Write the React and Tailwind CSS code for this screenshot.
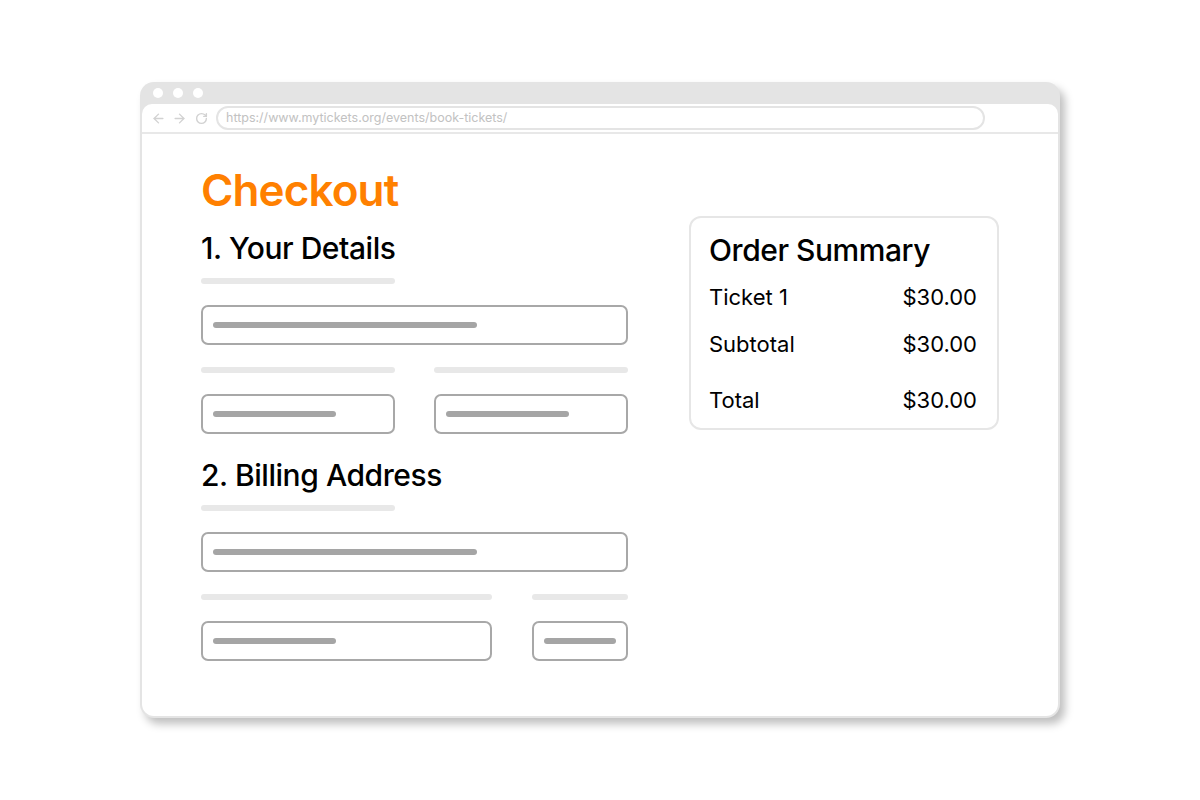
import React from 'react';
import { ArrowLeft, ArrowRight, RotateCw } from 'lucide-react';

const font = { fontFamily: 'Inter, "Noto Sans", sans-serif' };

const Label = ({ w = 'w-full' }) => (
  <div className={`h-[6px] rounded-full bg-[#e8e8e8] ${w}`} />
);

const Field = ({ bar = 'w-[264px]', className = '' }) => (
  <div className={`h-[40px] rounded-[7px] border-2 border-[#a8a8a8] flex items-center pl-[10px] ${className}`}>
    <div className={`h-[6px] rounded-full bg-[#a5a5a5] ${bar}`} />
  </div>
);

const Row = ({ name, value, className = '' }) => (
  <div className={`flex justify-between items-baseline text-[22px] leading-[28px] text-black ${className}`}>
    <span>{name}</span>
    <span>{value}</span>
  </div>
);

export default function App() {
  return (
    <div className="w-full h-screen bg-white flex items-center justify-center" style={font}>
      {/* browser window */}
      <div className="w-[920px] h-[636px] rounded-[14px] bg-[#e4e4e4] px-[2px] pb-[2px] pt-[22px] flex flex-col shadow-[5px_6px_8px_rgba(0,0,0,0.25)]">
        <div className="absolute ml-[11px] -mt-[16px] flex gap-[10px]">
          <span className="w-[10px] h-[10px] rounded-full bg-white" />
          <span className="w-[10px] h-[10px] rounded-full bg-white" />
          <span className="w-[10px] h-[10px] rounded-full bg-white" />
        </div>

        <div className="flex-1 bg-white rounded-t-[10px] rounded-b-[12px] flex flex-col">
          {/* address bar */}
          <div className="h-[30px] border-b-2 border-[#e8e8e8] flex items-center pl-[9px] pr-[73px]">
            <div className="flex items-center gap-[6px] text-[#d2d2d2]">
              <ArrowLeft size={15} strokeWidth={2.2} />
              <ArrowRight size={15} strokeWidth={2.2} />
              <RotateCw size={13} strokeWidth={2.6} className="ml-[2px]" />
            </div>
            <div className="ml-[8px] flex-1 h-[24px] rounded-full border-2 border-[#e4e4e4] flex items-center pl-[8px] text-[12.5px] text-[#c2c2c2]">
              https://www.mytickets.org/events/book-tickets/
            </div>
          </div>

          {/* page */}
          <div className="flex-1 flex pl-[59px] pt-[32px]">
            <div className="w-[427px] flex flex-col">
              <h1 className="text-[44px] leading-[48px] font-semibold text-[#ff8000] tracking-[-0.02em]">Checkout</h1>

              <h2 className="mt-[18px] text-[30px] leading-[32px] font-medium text-black tracking-[-0.015em]">1. Your Details</h2>
              <div className="mt-[14px]"><Label w="w-[194px]" /></div>
              <Field className="mt-[21px]" />
              <div className="mt-[22px] flex justify-between">
                <Label w="w-[194px]" />
                <Label w="w-[194px]" />
              </div>
              <div className="mt-[21px] flex justify-between">
                <Field bar="w-[123px]" className="w-[194px]" />
                <Field bar="w-[123px]" className="w-[194px]" />
              </div>

              <h2 className="mt-[25px] text-[30px] leading-[32px] font-medium text-black tracking-[-0.015em]">2. Billing Address</h2>
              <div className="mt-[14px]"><Label w="w-[194px]" /></div>
              <Field className="mt-[21px]" />
              <div className="mt-[22px] flex justify-between">
                <Label w="w-[291px]" />
                <Label w="w-[96px]" />
              </div>
              <div className="mt-[21px] flex justify-between">
                <Field bar="w-[123px]" className="w-[291px]" />
                <Field bar="w-[72px]" className="w-[96px]" />
              </div>
            </div>

            {/* order summary */}
            <div className="ml-[61px] mt-[50px] w-[310px] h-[214px] rounded-[12px] border-2 border-[#e6e6e6] pl-[18px] pr-[20px] pt-[14px]">
              <h3 className="text-[30px] leading-[36px] font-medium text-black tracking-[-0.015em]">Order Summary</h3>
              <Row name="Ticket 1" value="$30.00" className="mt-[15px]" />
              <Row name="Subtotal" value="$30.00" className="mt-[19px]" />
              <Row name="Total" value="$30.00" className="mt-[28px]" />
            </div>
          </div>
        </div>
      </div>
    </div>
  );
}
